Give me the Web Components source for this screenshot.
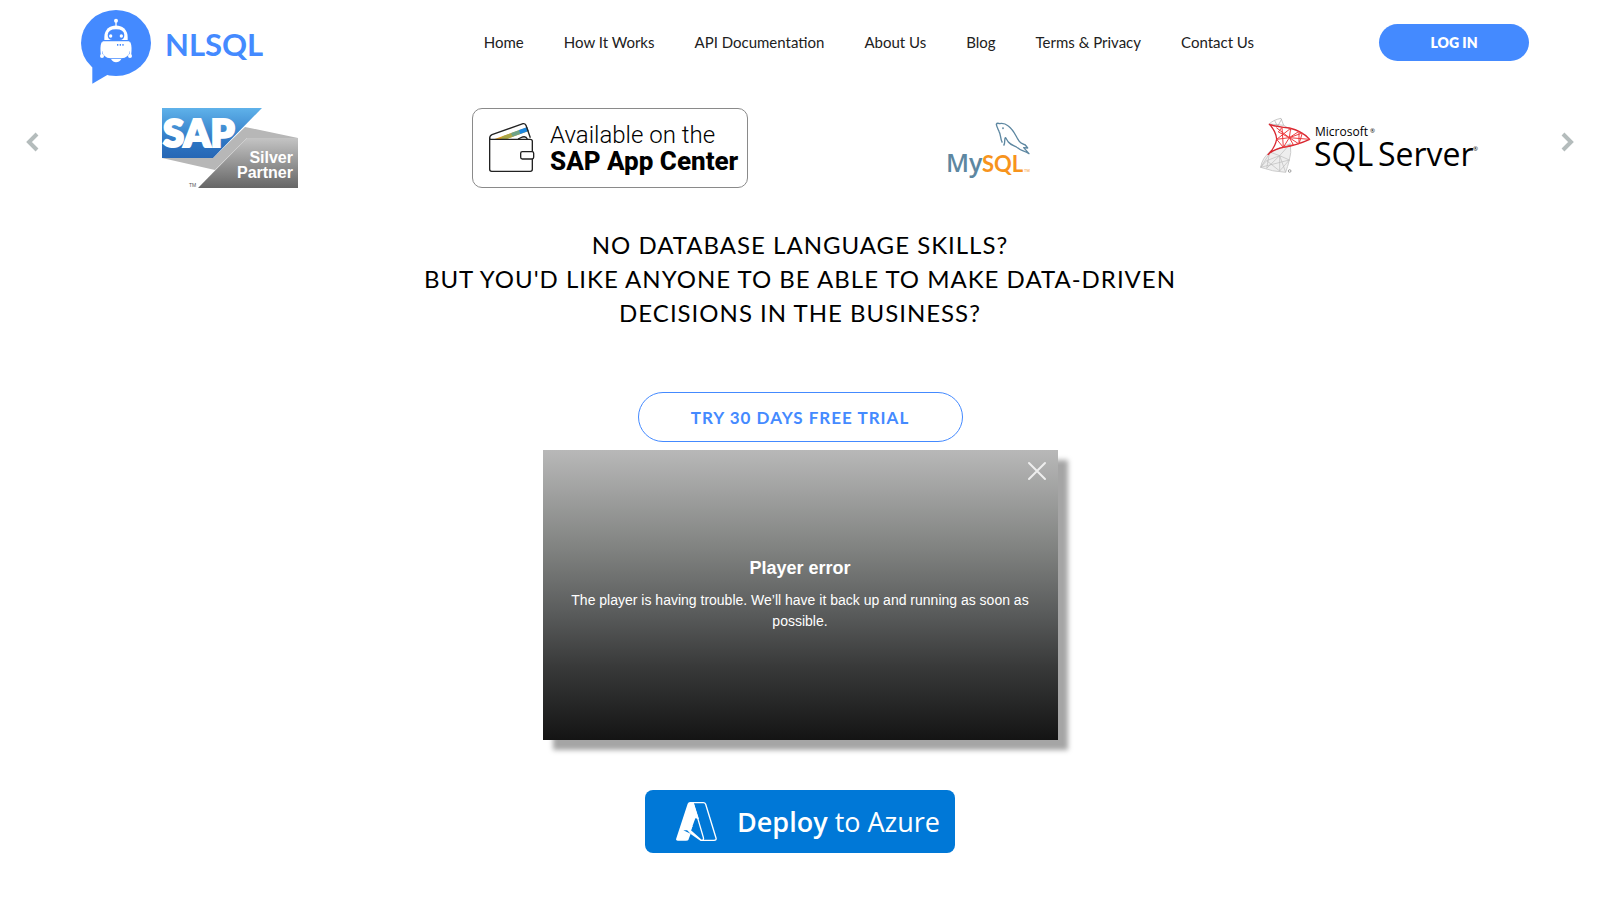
<!DOCTYPE html>
<html lang="en">
<head>
<meta charset="utf-8">
<meta name="viewport" content="width=device-width, initial-scale=1">
<title>NLSQL</title>
<style>
  body {
    margin: 0;
    background: #fff;
    color: #212121;
    font-family: Lato, sans-serif;
  }
</style>
</head>
<body>
<nl-page></nl-page>

<script>
/* Shared base: every element drops its markup in an open shadow root */

class NlElement extends HTMLElement {
  constructor() {
    super();
    this.attachShadow({ mode: 'open' });
  }

  connectedCallback() {
    if (!this.rendered) {
      this.shadowRoot.innerHTML = this.render();
      this.rendered = true;
    }
  }
}

class NlLogo extends NlElement {
  render() {
    return `
      <style>
        :host { display: block; }
        a {
          display: flex;
          align-items: flex-start;
          gap: 14px;
          color: #448aff;
          font-size: 31px;
          font-weight: 700;
          line-height: 68px;
          text-decoration: none;
        }
        svg { flex: none; }
      </style>
      <a href="#home">
        <svg width="70" height="74" viewBox="33 30 210 222" aria-hidden="true">
          <ellipse cx="138" cy="129" rx="105" ry="99" fill="#448aff"/>
          <path d="M67 185V251L113 224Z" fill="#448aff"/>
          <g fill="#fff">
            <circle cx="138" cy="62" r="6"/>
            <path d="M136 64h4v14h-4z"/>
            <path d="M103 120V111C103 65 173 65 173 111V120Z"/>
            <path d="M100 124H176Q180 124 180 130V151Q177 174 154 175H122Q99 174 96 151V130Q96 124 100 124Z"/>
            <path d="M123 177H154Q148 187 138 187Q129 187 123 177Z"/>
            <circle cx="96" cy="168" r="6"/>
            <circle cx="180" cy="168" r="6"/>
          </g>
          <path d="M97 128Q92 140 95 165M179 128Q184 140 181 165" fill="none" stroke="#fff" stroke-width="5"/>
          <path d="M113 105Q114 88 138 88Q162 88 163 105Q163 120 149 120H127Q113 120 113 105Z" fill="#448aff"/>
          <circle cx="122" cy="108" r="5" fill="#fff"/>
          <circle cx="154" cy="108" r="5" fill="#fff"/>
          <path d="M141 132h4v5h-4zM149 132h4v5h-4zM157 132h4v5h-4z" fill="#448aff"/>
        </svg>
        <span>NLSQL</span>
      </a>
    `;
  }
}
customElements.define('nl-logo', NlLogo);

class NlHeader extends NlElement {
  render() {
    const links = ['Home', 'How It Works', 'API Documentation', 'About Us', 'Blog', 'Terms & Privacy', 'Contact Us'];
    return `
      <style>
        :host {
          display: grid;
          grid-template-columns: 9fr 20fr 150px;
          align-items: start;
          padding: 10px 71px 0 81px;
        }
        nav {
          display: flex;
          gap: 40px;
          margin-top: 14px;
          line-height: 37px;
          white-space: nowrap;
        }
        nav a {
          color: #212121;
          font-size: 15px;
          text-decoration: none;
        }
        button {
          height: 37px;
          margin-top: 14px;
          border: 0;
          border-radius: 19px;
          background: #448aff;
          color: #fff;
          font: 800 14px Lato, sans-serif;
        }
      </style>
      <nl-logo></nl-logo>
      <nav>${links.map(text => `<a href="#">${text.replace('&', '&amp;')}</a>`).join('')}</nav>
      <button type="button">LOG IN</button>
    `;
  }
}
customElements.define('nl-header', NlHeader);

/* Partner logos */

class SapPartner extends NlElement {
  render() {
    return `
      <style>
        :host { display: block; }
        svg { display: block; overflow: visible; }
      </style>
      <svg width="136" height="80" viewBox="0 0 136 80">
        <defs>
          <linearGradient id="blue" x1="0" y1="0" x2="0" y2="1">
            <stop offset="0" stop-color="#5fb2ea"/><stop offset=".7" stop-color="#2d74c2"/><stop offset="1" stop-color="#2767b5"/>
          </linearGradient>
          <linearGradient id="grey" x1="0" y1="0" x2="0" y2="1">
            <stop offset="0" stop-color="#c4c4c4"/><stop offset="1" stop-color="#666"/>
          </linearGradient>
        </defs>
        <path d="M0 50H51L83 19L136 30H85L53 62Z" fill="#b7b7b7"/>
        <path d="M0 0H100L51 50H0Z" fill="url(#blue)"/>
        <path d="M85 30H136V80H36Z" fill="url(#grey)"/>
        <text x="1" y="39" font-family="Lato, sans-serif" font-size="38" font-weight="800" fill="#fff" stroke="#fff" stroke-width="2">SAP</text>
        <g font-family="Liberation Sans, sans-serif" fill="#fff">
          <text x="131" y="55" text-anchor="end" font-size="16" font-weight="700">Silver</text>
          <text x="131" y="70" text-anchor="end" font-size="16" font-weight="700">Partner</text>
          <text x="27" y="79" font-size="5" fill="#555">TM</text>
        </g>
      </svg>
    `;
  }
}
customElements.define('sap-partner', SapPartner);

class SapAppCenter extends NlElement {
  render() {
    return `
      <style>
        :host {
          display: flex;
          align-items: center;
          gap: 14px;
          box-sizing: border-box;
          width: 276px;
          height: 80px;
          padding-left: 15px;
          border: 1px solid #8a8a8a;
          border-radius: 10px;
          color: #000;
          font: 300 24px/26px Roboto, sans-serif;
          white-space: nowrap;
        }
        svg { flex: none; }
        b { display: block; font-size: 26px; font-weight: 800; }
      </style>
      <svg width="48" height="52" viewBox="86 74 144 156" fill="none" stroke="#222" stroke-width="4" aria-hidden="true">
        <path d="M106 125L204 90L208 101L142 125Z" fill="#e29b20" stroke="none"/>
        <path d="M130 117L157 107L161 118L142 125H124Z" fill="#a9a648" stroke="none"/>
        <path d="M155 107L180 98L185 109L160 118Z" fill="#6da287" stroke="none"/>
        <path d="M179 98L204 89L208 101L183 110Z" fill="#1b86df" stroke="none"/>
        <path d="M91 126Q90 115 98 112L191 79Q197 78 200 84L213 121"/>
        <path d="M176 125L190 119Q200 116 204 125"/>
        <path d="M91 126H213Q219 126 219 132V163M219 185V216Q219 222 213 222H97Q91 222 91 216V122"/>
        <rect x="184" y="163" width="39" height="22" rx="5"/>
      </svg>
      <span>Available on the<b>SAP App Center</b></span>
    `;
  }
}
customElements.define('sap-app-center', SapAppCenter);

class MysqlLogo extends NlElement {
  render() {
    return `
      <style>
        :host { display: block; }
        svg { display: block; overflow: visible; }
      </style>
      <svg width="84" height="52" viewBox="0 0 84 52">
        <g transform="translate(-18 -12) scale(.3333)" fill="none" stroke="#5d87a1" stroke-width="4" stroke-linejoin="round">
          <path d="M217 98C210 86 213 73 207 64C204 57 199 48 199 43Q201 38 209 41Q222 38 235 48C250 59 255 73 264 88C268 97 276 102 286 105L293 114L281 113L297 131C282 122 272 122 264 114C253 107 242 105 235 96C231 91 229 85 226 83C222 88 227 97 221 107"/>
          <circle cx="219" cy="55" r="1"/>
        </g>
        <text x="-2" y="50" font-family="Open Sans, sans-serif" font-size="25" font-weight="600" fill="#5d87a1">My</text>
        <text x="34" y="50" font-family="Lato, sans-serif" font-size="22" font-weight="700" fill="#f7941d">SQL</text>
        <text x="76" y="50" font-family="Liberation Sans, sans-serif" font-size="4" fill="#f7941d">TM</text>
      </svg>
    `;
  }
}
customElements.define('mysql-logo', MysqlLogo);

class SqlServerLogo extends NlElement {
  render() {
    return `
      <style>
        :host { display: block; }
        svg { display: block; overflow: visible; }
      </style>
      <svg width="220" height="64" viewBox="0 0 220 64">
        <g transform="translate(-20 -11) scale(.3333)" fill="none" stroke-linejoin="round">
          <path d="M88 57Q99 45 123 40L131 61L155 75M88 57L131 61M104 47L113 64L125 42" stroke="#aaa" stroke-width="2"/>
          <path d="M151 116Q155 145 148 165Q143 185 137 202Q97 200 62 187Q66 160 89 141Q117 130 151 116Z" fill="#eee" stroke="#ccc" stroke-width="3"/>
          <path d="M89 141L80 190L119 152L148 165L119 198L80 167L62 187M119 152L89 141M119 152L151 116M119 152V198M80 167L119 152L137 202M84 153L62 187L148 165" stroke="#bbb" stroke-width="2"/>
          <path d="M88 58Q110 66 148 69Q185 77 209 103Q172 120 130 127Q102 132 84 149Q106 127 110 102Q107 77 88 58Z" stroke="#d9262f" stroke-width="4"/>
          <path d="M109 68L148 98L110 103L130 127L148 98L177 117L187 84L148 98L152 70L110 103M148 98L209 103M130 127L126 67L115 81L148 98M130 127L160 119L148 98M177 79L148 98M177 79L177 117" stroke="#ec3a3d" stroke-width="3"/>
          <circle cx="149" cy="198" r="4" stroke="#777" stroke-width="2"/>
        </g>
        <g font-family="Open Sans, sans-serif" fill="#000">
          <text x="55" y="20" font-size="12">Microsoft</text>
          <text x="110" y="17" font-size="6">®</text>
          <text x="54" y="50" font-size="32">SQL</text>
          <text x="118" y="50" font-size="32">Server</text>
          <text x="213" y="35" font-size="6">®</text>
        </g>
      </svg>
    `;
  }
}
customElements.define('sql-server-logo', SqlServerLogo);

class LogoCarousel extends NlElement {
  render() {
    return `
      <style>
        :host {
          display: grid;
          grid-template-columns: 40px 1fr 40px;
          margin-top: 24px;
        }
        .slides {
          display: grid;
          grid-template-columns: repeat(4, 1fr);
          align-items: center;
          justify-items: center;
          height: 80px;
        }
        button {
          display: flex;
          align-items: center;
          height: 67px;
          padding: 0;
          border: 0;
          background: none;
        }
        .prev { justify-content: flex-end; }
        svg { fill: none; stroke: #b4bcbc; stroke-width: 4; }
      </style>
      <button class="prev" type="button" aria-label="Previous">
        <svg width="14" height="20" viewBox="0 0 14 20"><path d="M11 2L3 10L11 18"/></svg>
      </button>
      <div class="slides"><slot></slot></div>
      <button type="button" aria-label="Next">
        <svg width="14" height="20" viewBox="0 0 14 20"><path d="M3 2L11 10L3 18"/></svg>
      </button>
    `;
  }
}
customElements.define('logo-carousel', LogoCarousel);

/* Hero */

class TrialButton extends NlElement {
  render() {
    return `
      <style>
        :host { display: block; }
        button {
          display: block;
          width: 325px;
          height: 50px;
          border: 1px solid #448aff;
          border-radius: 25px;
          background: #fff;
          color: #448aff;
          font: 700 17px Lato, sans-serif;
          letter-spacing: 1px;
        }
      </style>
      <button type="button"><slot></slot></button>
    `;
  }
}
customElements.define('trial-button', TrialButton);

class VideoPlayer extends NlElement {
  render() {
    return `
      <style>
        :host {
          display: flex;
          flex-direction: column;
          justify-content: center;
          position: relative;
          box-sizing: border-box;
          width: 515px;
          max-width: 100%;
          height: 290px;
          padding: 0 20px 4px;
          background: linear-gradient(#b8b8b8, #828482 33%, #5a5c5c 56%, #383939 75%, #141414);
          box-shadow: 10px 10px 5px #a5a5a5;
          color: #fff;
          font: 14px/21px "Liberation Sans", sans-serif;
          text-align: center;
        }
        h2 { margin: 0 0 8px; font-size: 18px; line-height: 27px; }
        p { margin: 0; }
        button {
          position: absolute;
          top: 11px;
          right: 11px;
          width: 20px;
          height: 20px;
          padding: 0;
          border: 0;
          background: none;
        }
        svg { display: block; }
      </style>
      <button type="button" aria-label="Close">
        <svg width="20" height="20" viewBox="0 0 20 20"><path d="M2 2L18 18M18 2L2 18" stroke="#eee" stroke-width="2" stroke-linecap="round"/></svg>
      </button>
      <h2>Player error</h2>
      <p>The player is having trouble. We’ll have it back up and running as soon as possible.</p>
    `;
  }
}
customElements.define('video-player', VideoPlayer);

class AzureButton extends NlElement {
  render() {
    return `
      <style>
        :host { display: block; }
        a {
          display: flex;
          align-items: center;
          gap: 20px;
          box-sizing: border-box;
          width: 310px;
          height: 63px;
          padding-left: 31px;
          border-radius: 8px;
          background: #0078d7;
          color: #fff;
          font: 27px/63px "Open Sans", sans-serif;
          text-decoration: none;
          white-space: nowrap;
        }
        b { font-weight: 600; }
        svg { flex: none; }
      </style>
      <a href="#deploy">
        <svg width="41" height="39" viewBox="138 64 123 117" fill="#fff" aria-hidden="true">
          <path d="M180 64H190L207 115L196 113L183 149H160L182 159L175 178Q174 180 168 180H143Q136 180 139 173L173 69Q175 64 180 64Z"/>
          <path d="M160 136H188L183 149L215 177L212 181L182 160Z"/>
          <path d="M180 66H220Q225 66 227 71L258 172Q260 179 252 179H212M190 68L220 170Q222 178 216 179" fill="none" stroke="#fff" stroke-width="4"/>
        </svg>
        <span><b>Deploy</b> to Azure</span>
      </a>
    `;
  }
}
customElements.define('azure-button', AzureButton);

class NlPage extends NlElement {
  render() {
    return `
      <style>
        :host { display: block; }
        main {
          display: flex;
          flex-direction: column;
          align-items: center;
          padding: 40px 20px;
        }
        h1 {
          max-width: 800px;
          margin: 0 0 62px;
          color: #000;
          font-size: 24px;
          font-weight: 400;
          line-height: 34px;
          letter-spacing: 1px;
          text-align: center;
          text-transform: uppercase;
        }
        video-player { margin: 8px 0 50px; }
      </style>
      <nl-header></nl-header>
      <logo-carousel>
        <sap-partner></sap-partner>
        <sap-app-center></sap-app-center>
        <mysql-logo></mysql-logo>
        <sql-server-logo></sql-server-logo>
      </logo-carousel>
      <main>
        <h1>No database language skills?<br>But you'd like anyone to be able to make data-driven decisions in the business?</h1>
        <trial-button>TRY 30 DAYS FREE TRIAL</trial-button>
        <video-player></video-player>
        <azure-button></azure-button>
      </main>
    `;
  }
}
customElements.define('nl-page', NlPage);
</script>
</body>
</html>
